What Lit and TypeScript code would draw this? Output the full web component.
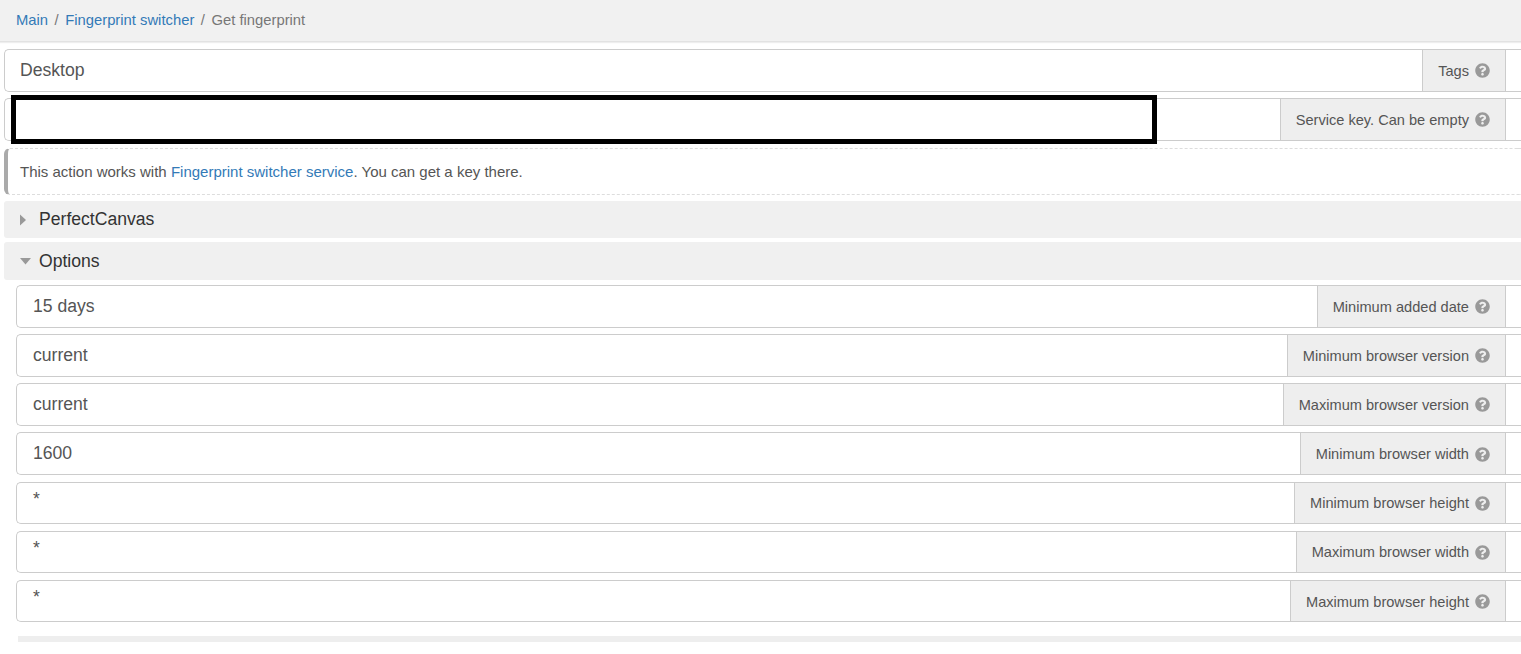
import { LitElement, html, css, svg } from 'lit';
import { customElement } from 'lit/decorators.js';

const helpIcon = svg`<path d="M504 256c0 136.997-111.043 248-248 248S8 392.997 8 256C8 119.083 119.043 8 256 8s248 111.083 248 248zM262.655 90c-54.497 0-89.255 22.957-116.549 63.758-3.536 5.286-2.353 12.415 2.715 16.258l34.699 26.31c5.205 3.947 12.621 3.008 16.665-2.122 17.864-22.658 30.113-35.797 57.303-35.797 20.429 0 45.698 13.148 45.698 32.958 0 14.976-12.363 22.667-32.534 33.976C247.128 238.528 216 254.941 216 296v4c0 6.627 5.373 12 12 12h56c6.627 0 12-5.373 12-12v-1.333c0-28.462 83.186-29.647 83.186-106.667 0-58.002-60.165-102-116.531-102zM256 338c-25.365 0-46 20.635-46 46 0 25.364 20.635 46 46 46s46-20.636 46-46c0-25.365-20.635-46-46-46z"></path>`;

const options = [
    ['15 days', 'Minimum added date'],
    ['current', 'Minimum browser version'],
    ['current', 'Maximum browser version'],
    ['1600', 'Minimum browser width'],
    ['*', 'Minimum browser height'],
    ['*', 'Maximum browser width'],
    ['*', 'Maximum browser height'],
];

@customElement('app-root')
export class AppRoot extends LitElement {
    static styles = css`
        :host {
            display: block;
            height: 654px;
            overflow: hidden;
            background: #fff;
            font-family: "Liberation Sans", Arial, sans-serif;
            font-size: 14.6px;
            color: #555;
        }
        a { color: #337ab7; text-decoration: none; }

        .breadcrumb {
            display: flex;
            align-items: center;
            height: 42px;
            box-sizing: border-box;
            padding: 0 16px 2px;
            background: #f1f1f1;
            border-bottom: 1px solid #e2e2e2;
            box-shadow: 0 1px 1px #eee;
            font-size: 14.8px;
        }
        .breadcrumb .sep { color: #777; padding: 0 6.5px; }
        .breadcrumb .current { color: #777; }

        .content { padding: 7px 0 0 4px; position: relative; }

        .row {
            display: flex;
            height: 42.5px;
            box-sizing: border-box;
            margin-bottom: 6.67px;
        }
        .value {
            flex: 1;
            display: flex;
            align-items: center;
            padding: 0 16px 0 15px;
            font-size: 17.6px;
            border: 1px solid #ccc;
            border-right: 0;
            border-radius: 5px 0 0 5px;
            white-space: pre;
        }
        .options .value { padding-left: 16px; }
        .star { padding-bottom: 7px; }
        .addon {
            display: flex;
            align-items: center;
            gap: 6px;
            padding: 0.6px 15px 0;
            background: #eee;
            border: 1px solid #ccc;
            white-space: nowrap;
        }
        .addon svg { width: 15px; height: 15px; fill: #999; }
        .tail {
            flex: 0 0 15px;
            border-top: 1px solid #ccc;
            border-bottom: 1px solid #ccc;
        }

        .redacted {
            position: absolute;
            left: 11px;
            top: 53px;
            width: 1146px;
            height: 49px;
            box-sizing: border-box;
            background: #fff;
            border: 5px solid #000;
        }

        .note {
            display: flex;
            align-items: center;
            height: 47.4px;
            box-sizing: border-box;
            padding-left: 12px;
            margin: 7.2px 0 5.6px;
            border: 1px dashed #ddd;
            border-left: 4px solid #aaa;
            border-right: 0;
            border-radius: 6px 0 0 6px;
            font-size: 15px;
            white-space: pre;
        }

        .section {
            display: flex;
            align-items: center;
            height: 37.6px;
            box-sizing: border-box;
            padding: 0 0 0 16px;
            margin-bottom: 4px;
            background: #f0f0f0;
            border-radius: 3px 0 0 3px;
            font-size: 17.6px;
            color: #333;
        }
        .section svg { width: 11px; height: 12px; margin-right: 8px; fill: #999; }

        .options { padding: 0 0 0 12px; margin-top: 5px; }
        .footer-bar { height: 6px; margin: 13.5px 0 0 2px; background: #eee; }
    `;

    renderRow(value: string, label: string) {
        return html`
            <div class="row">
                <div class="value"><span class=${value === '*' ? 'star' : ''}>${value}</span></div>
                <div class="addon">
                    ${label}
                    <svg viewBox="0 0 512 512">${helpIcon}</svg>
                </div>
                <div class="tail"></div>
            </div>
        `;
    }

    render() {
        return html`
            <nav class="breadcrumb">
                <a href="#">Main</a><span class="sep">/</span>
                <a href="#">Fingerprint switcher</a><span class="sep">/</span>
                <span class="current">Get fingerprint</span>
            </nav>
            <div class="content">
                ${this.renderRow('Desktop', 'Tags')}
                ${this.renderRow('', 'Service key. Can be empty')}
                <div class="redacted"></div>
                <div class="note">This action works with <a href="#">Fingerprint switcher service</a>. You can get a key there.</div>
                <div class="section">
                    <svg viewBox="0 0 11 12"><path d="M0 0.5 L6 6 L0 11.5 Z"></path></svg>
                    PerfectCanvas
                </div>
                <div class="section">
                    <svg viewBox="0 0 11 12"><path d="M0 3 H11 L5.5 9.5 Z"></path></svg>
                    Options
                </div>
                <div class="options">
                    ${options.map(([value, label]) => this.renderRow(value, label))}
                    <div class="footer-bar"></div>
                </div>
            </div>
        `;
    }
}
